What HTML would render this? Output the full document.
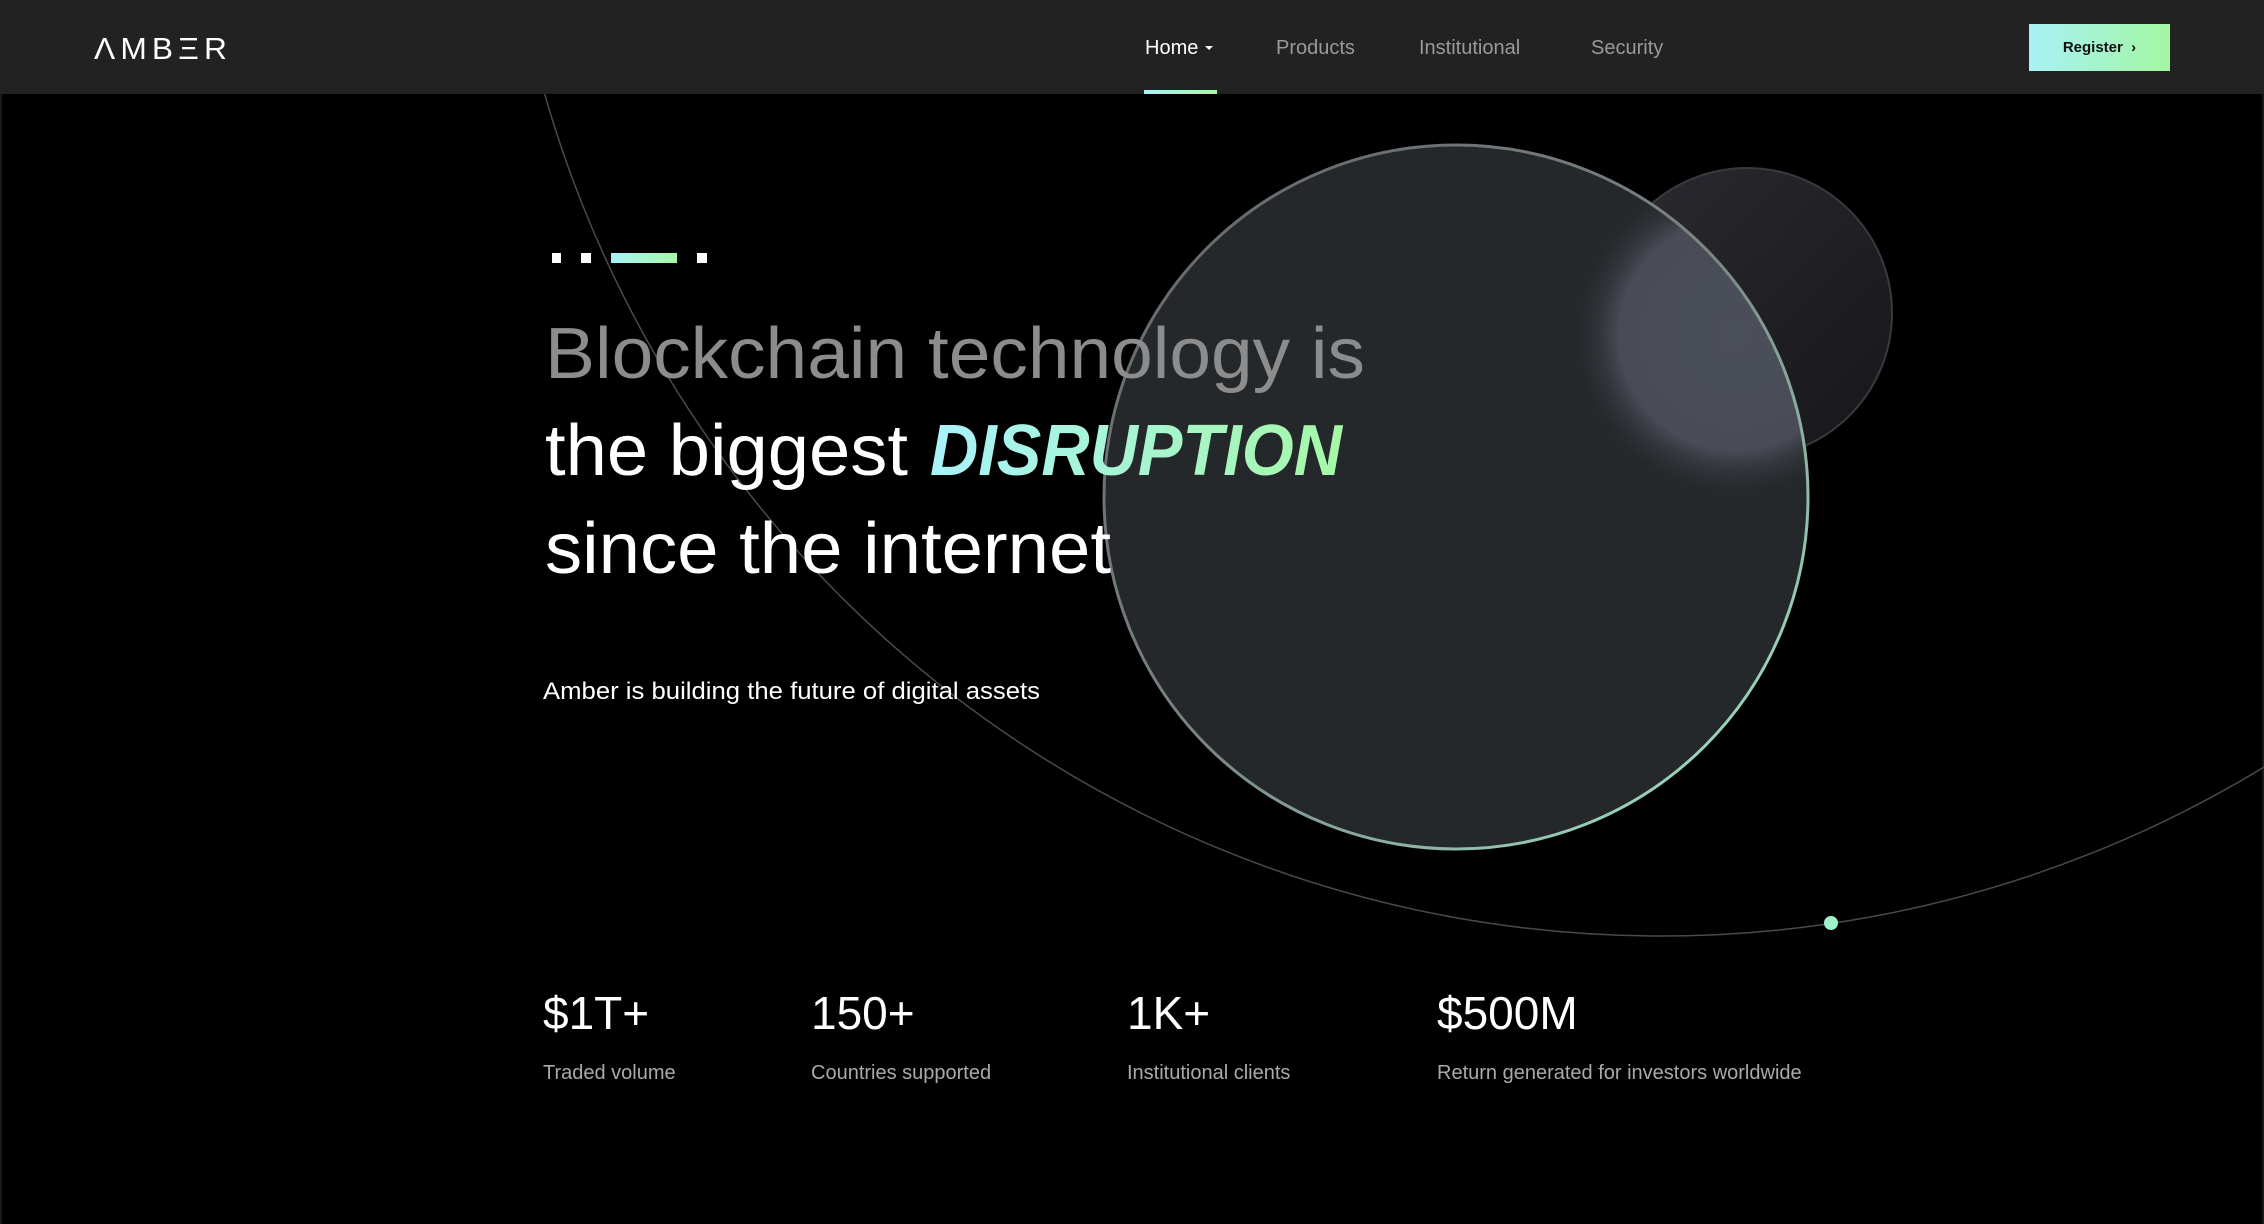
<!DOCTYPE html>
<html><head><meta charset="utf-8">
<style>
html,body{margin:0;padding:0;background:#000;}
body{width:2264px;height:1224px;position:relative;overflow:hidden;font-family:"Liberation Sans",sans-serif;}
.hdr{position:absolute;left:0;top:0;width:2264px;height:94px;background:#222;}
.nav{position:absolute;top:34px;font-size:20px;color:#9a9a9a;line-height:28px;}
.btn{position:absolute;left:2029px;top:24px;width:141px;height:47px;background:linear-gradient(90deg,#a8f1f6,#a4f6a2);color:#111;font-size:15px;font-weight:bold;line-height:47px;text-align:center;}
.stat{position:absolute;color:#fff;}
.num{font-size:46px;line-height:46px;}
.lab{font-size:20px;color:#aaa;margin-top:26px;}
</style></head><body>
<div class="hdr"></div>
<svg style="position:absolute;left:0;top:0" width="2264" height="1224">
<defs>
<linearGradient id="g1" x1="0" x2="1" y1="0" y2="0"><stop offset="0" stop-color="#a8f2fb"/><stop offset="1" stop-color="#a6f8a6"/></linearGradient>
<linearGradient id="rim" x1="0" y1="0" x2="1" y2="1"><stop offset="0" stop-color="#5f6265"/><stop offset="0.5" stop-color="#7a8584"/><stop offset="1" stop-color="#a6f0d0"/></linearGradient>
<linearGradient id="sm" x1="0" y1="0" x2="1" y2="1"><stop offset="0" stop-color="#2a2a30"/><stop offset="1" stop-color="#17171a"/></linearGradient>
<radialGradient id="hl" cx="0.5" cy="0.5" r="0.5"><stop offset="0" stop-color="#4b4f59"/><stop offset="0.7" stop-color="#494c56"/><stop offset="1" stop-color="#26292c" stop-opacity="0"/></radialGradient>
<clipPath id="cc"><circle cx="1456" cy="497" r="352"/></clipPath>
<clipPath id="below"><rect x="0" y="94" width="2264" height="1130"/></clipPath>
</defs>
<!-- logo -->
<text x="94" y="59" fill="#fff" font-size="31" font-family="Liberation Sans" letter-spacing="5" textLength="138" lengthAdjust="spacingAndGlyphs">ΛMBΞR</text>
<!-- home underline -->
<rect x="1144" y="90" width="73" height="4" fill="url(#g1)"/>
<path d="M1205 46 l8 0 l-4 4 z" fill="#fff"/>
<!-- side borders -->
<rect x="0" y="94" width="2" height="1130" fill="#1a1a1a"/>
<rect x="2262" y="94" width="2" height="1130" fill="#1a1a1a"/>
<!-- small back circle -->
<circle cx="1747" cy="313" r="145" fill="url(#sm)" stroke="#3a3a3e" stroke-width="2"/>
<!-- orbit arc -->
<circle cx="1661" cy="-225" r="1161" fill="none" stroke="#4a4a4a" stroke-width="1.5" clip-path="url(#below)"/>
<!-- big circle -->
<circle cx="1456" cy="497" r="353" fill="#25282b"/>
<circle cx="1735" cy="335" r="165" fill="url(#hl)" clip-path="url(#cc)"/>
<circle cx="1456" cy="497" r="352" fill="none" stroke="url(#rim)" stroke-width="3"/>
<circle cx="1831" cy="923" r="7" fill="#9ff3c6"/>
<!-- dots -->
<rect x="552" y="253" width="9" height="10" fill="#fff"/>
<rect x="581" y="253" width="10" height="10" fill="#fff"/>
<rect x="611" y="253" width="66" height="10" fill="url(#g1)"/>
<rect x="697" y="253" width="10" height="10" fill="#fff"/>
<!-- headline -->
<text x="545" y="378" fill="#8c8c8c" font-size="72" textLength="820" lengthAdjust="spacingAndGlyphs">Blockchain technology is</text>
<text x="545" y="475" fill="#fff" font-size="72" textLength="363" lengthAdjust="spacingAndGlyphs">the biggest</text>
<text x="930" y="475" fill="url(#g1)" font-size="72" font-weight="bold" font-style="italic" textLength="412" lengthAdjust="spacingAndGlyphs">DISRUPTION</text>
<text x="545" y="573" fill="#fff" font-size="72" textLength="566" lengthAdjust="spacingAndGlyphs">since the internet</text>
<text x="543" y="699" fill="#fff" font-size="24" textLength="497" lengthAdjust="spacingAndGlyphs">Amber is building the future of digital assets</text>
</svg>
<div class="nav" style="left:1145px;color:#fff">Home</div>
<div class="nav" style="left:1276px">Products</div>
<div class="nav" style="left:1419px">Institutional</div>
<div class="nav" style="left:1591px">Security</div>
<div class="btn">Register &nbsp;›</div>
<div class="stat" style="left:543px;top:990px"><div class="num">$1T+</div><div class="lab">Traded volume</div></div>
<div class="stat" style="left:811px;top:990px"><div class="num">150+</div><div class="lab">Countries supported</div></div>
<div class="stat" style="left:1127px;top:990px"><div class="num">1K+</div><div class="lab">Institutional clients</div></div>
<div class="stat" style="left:1437px;top:990px"><div class="num">$500M</div><div class="lab">Return generated for investors worldwide</div></div>
</body></html>
